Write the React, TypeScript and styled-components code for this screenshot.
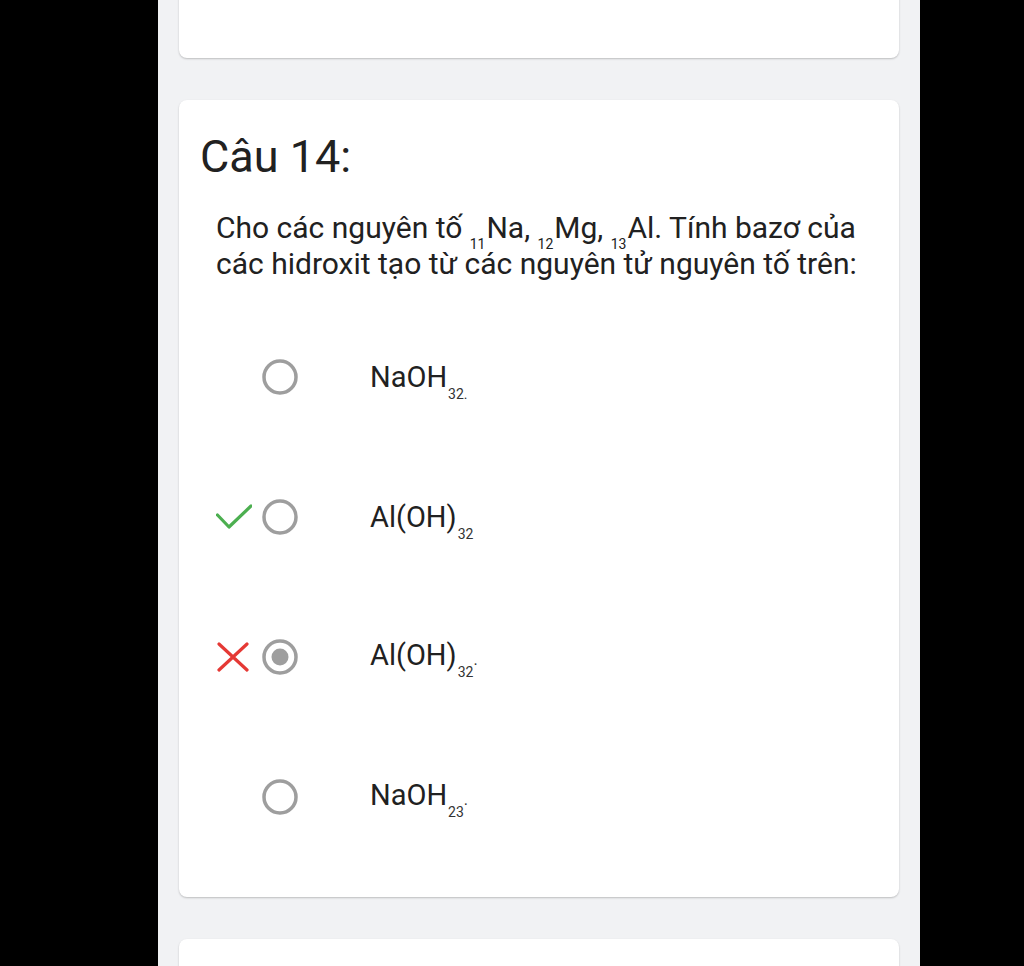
import styled, { createGlobalStyle } from "styled-components";

const GlobalStyle = createGlobalStyle`
  html, body {
    margin: 0;
    padding: 0;
    background: #000;
    height: 966px;
    overflow: hidden;
  }
  body {
    font-family: Roboto, "Noto Sans", "Liberation Sans", sans-serif;
  }
`;

const Column = styled.div`
  margin-left: 158px;
  width: 762px;
  min-height: 1200px;
  margin-top: -142px;
  background: #f1f2f4;
  padding: 0 21px;
  box-sizing: border-box;
  display: flex;
  flex-direction: column;
  gap: 42px;
`;

const Card = styled.div<{ height?: number }>`
  background: #fff;
  border-radius: 8px;
  box-shadow: 0 1px 2px rgba(0, 0, 0, 0.22);
  height: ${({ height }) => (height ? `${height}px` : "auto")};
  box-sizing: border-box;
`;

const QuestionCard = styled(Card)`
  padding: 31px 21px 30px;
`;

const Title = styled.h2`
  margin: 0;
  font-size: 45px;
  font-weight: 400;
  line-height: 52px;
  color: #212121;
`;

const Question = styled.p`
  margin: 27px 0 0 16px;
  font-size: 30px;
  line-height: 36px;
  color: #212121;
`;

const PreSub = styled.sub`
  font-size: 14px;
  line-height: 0;
  vertical-align: -11px;
  margin-right: 1px;
`;

const Options = styled.div`
  margin: 25px 0 0 16px;
  display: flex;
  flex-direction: column;
`;

const Row = styled.label`
  height: 140px;
  display: flex;
  align-items: center;
`;

const Marker = styled.span`
  width: 36px;
  height: 30px;
  display: flex;
  align-items: center;
  justify-content: center;
  margin-right: 10px;
`;

const Answer = styled.span`
  margin-left: 72px;
  font-size: 29px;
  line-height: 34px;
  color: #212121;
`;

const Sub = styled.sub`
  font-size: 14px;
  line-height: 0;
  vertical-align: -12px;
  margin-left: 1px;
  color: #333;
`;

const Dot = styled.span`
  font-size: 16px;
  color: #333;
`;

const Radio = ({ selected }: { selected?: boolean }) => (
  <svg width="36" height="36" viewBox="0 0 36 36">
    <circle cx="18" cy="18" r="16" fill="none" stroke="#9e9e9e" strokeWidth="3.5" />
    {selected && <circle cx="18" cy="18" r="8.5" fill="#9e9e9e" />}
  </svg>
);

const Check = () => (
  <svg width="36" height="26" viewBox="0 0 36 26">
    <polyline
      points="1.5,11 13,23 35,2"
      fill="none"
      stroke="#4caf50"
      strokeWidth="3.2"
      strokeLinecap="round"
      strokeLinejoin="round"
    />
  </svg>
);

const Cross = () => (
  <svg width="36" height="30" viewBox="0 0 36 30">
    <path
      d="M3 2 L31 28 M31 2 L3 28"
      fill="none"
      stroke="#e53935"
      strokeWidth="3.2"
      strokeLinecap="round"
    />
  </svg>
);

type Option = {
  name: string;
  sub: string;
  tail?: string;
  selected?: boolean;
  mark?: "right" | "wrong";
};

const options: Option[] = [
  { name: "NaOH", sub: "32." },
  { name: "Al(OH)", sub: "32", mark: "right" },
  { name: "Al(OH)", sub: "32", tail: ".", selected: true, mark: "wrong" },
  { name: "NaOH", sub: "23", tail: "." },
];

export default function App() {
  return (
    <>
      <GlobalStyle />
      <Column>
        <Card height={200} />
        <QuestionCard>
          <Title>Câu 14:</Title>
          <Question>
            Cho các nguyên tố <PreSub>11</PreSub>Na, <PreSub>12</PreSub>Mg,{" "}
            <PreSub>13</PreSub>Al. Tính bazơ của các hidroxit tạo từ các nguyên
            tử nguyên tố trên:
          </Question>
          <Options>
            {options.map((o, i) => (
              <Row key={i}>
                <Marker>
                  {o.mark === "right" && <Check />}
                  {o.mark === "wrong" && <Cross />}
                </Marker>
                <Radio selected={o.selected} />
                <Answer>
                  {o.name}
                  <Sub>{o.sub}</Sub>
                  {o.tail && <Dot>{o.tail}</Dot>}
                </Answer>
              </Row>
            ))}
          </Options>
        </QuestionCard>
        <Card height={200} />
      </Column>
    </>
  );
}
